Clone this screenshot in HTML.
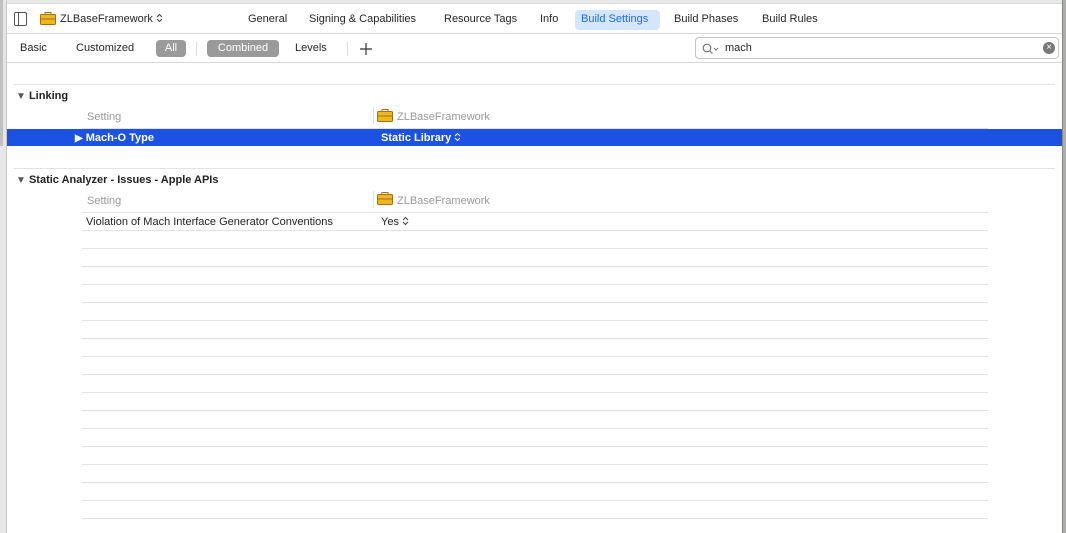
<!DOCTYPE html>
<html><head><meta charset="utf-8"><style>
*{margin:0;padding:0;box-sizing:border-box}
body{width:1066px;height:533px;overflow:hidden;background:#fff;font-family:"Liberation Sans",sans-serif;font-size:11px;color:#222;position:relative}
.a{position:absolute;white-space:nowrap}
.hl{position:absolute;height:1px;background:#e2e2e2}
.tb{font-size:11px;color:#262626}
.ud{display:inline-block;vertical-align:-1px;margin-left:3px}
</style></head><body>
<div class="a" style="left:0;top:0;width:1066px;height:4px;background:#e8e8e8;border-bottom:1px solid #d8d8d8"></div>
<div class="a" style="left:0;top:0;width:7px;height:533px;background:#e6e6e6;border-right:1px solid #c8c8c8"></div>
<div class="a" style="left:0;top:0;width:3px;height:146px;background:#c0c0c0"></div>
<div class="a" style="left:1062px;top:0;width:4px;height:533px;background:#a9b0a8;border-left:1px solid #888"></div>
<div class="a" style="left:7px;top:33px;width:1055px;height:1px;background:#d6d6d6"></div>
<div class="a" style="left:7px;top:62px;width:1055px;height:1px;background:#d6d6d6"></div>
<div class="a" style="left:14px;top:12px;width:13px;height:14px;border:1px solid #555;border-radius:2px"></div>
<div class="a" style="left:18px;top:12px;width:1px;height:14px;background:#555"></div>
<svg class="a" style="left:40px;top:12px" width="16" height="13" viewBox="0 0 16 13"><rect x="5" y="0.5" width="6" height="3" fill="none" stroke="#a5700f"/><rect x="0.5" y="2.5" width="15" height="10" rx="1" fill="#f0b820" stroke="#a5700f"/><line x1="1" y1="7" x2="15" y2="7" stroke="#a5700f"/></svg>
<div class="a tb" style="left:60px;top:13px">ZLBaseFramework<svg class="ud" width="7" height="10" viewBox="0 0 7 10"><path d="M1 4l2.5-2.5L6 4M1 6l2.5 2.5L6 6" fill="none" stroke="#444"/></svg></div>
<div class="a tb" style="left:248px;top:13px">General</div>
<div class="a tb" style="left:309px;top:13px">Signing &amp; Capabilities</div>
<div class="a tb" style="left:444px;top:13px">Resource Tags</div>
<div class="a tb" style="left:540px;top:13px">Info</div>
<div class="a" style="left:575px;top:10px;width:85px;height:20px;background:#d3e6fd;border-radius:4px"></div>
<div class="a tb" style="left:581px;top:13px;color:#1a6cf0">Build Settings</div>
<div class="a tb" style="left:674px;top:13px">Build Phases</div>
<div class="a tb" style="left:762px;top:13px">Build Rules</div>
<div class="a tb" style="left:20px;top:42px">Basic</div>
<div class="a tb" style="left:76px;top:42px">Customized</div>
<div class="a" style="left:156px;top:40px;width:30px;height:17px;background:#9a9a9a;border-radius:4px;color:#fff;text-align:center;line-height:17px">All</div>
<div class="a" style="left:196px;top:42px;width:1px;height:14px;background:#ddd"></div>
<div class="a" style="left:207px;top:40px;width:72px;height:17px;background:#9a9a9a;border-radius:4px;color:#fff;text-align:center;line-height:17px">Combined</div>
<div class="a tb" style="left:295px;top:42px">Levels</div>
<div class="a" style="left:347px;top:42px;width:1px;height:14px;background:#ddd"></div>
<svg class="a" style="left:360px;top:43px" width="12" height="12" viewBox="0 0 12 12"><path d="M6 0v12M0 6h12" stroke="#333" stroke-width="1.2"/></svg>
<div class="a" style="left:695px;top:37px;width:364px;height:22px;border:1px solid #c4c4c4;border-radius:4px"></div>
<svg class="a" style="left:702px;top:43px" width="18" height="12" viewBox="0 0 18 12"><circle cx="5" cy="5" r="3.8" fill="none" stroke="#777" stroke-width="1.2"/><line x1="8" y1="8" x2="10.5" y2="10.5" stroke="#777" stroke-width="1.2"/><path d="M12 5l2 2 2-2" fill="none" stroke="#777"/></svg>
<div class="a tb" style="left:725px;top:42px">mach</div>
<div class="a" style="left:1043px;top:42px;width:12px;height:12px;border-radius:50%;background:#777;color:#fff;font-size:10px;line-height:12px;text-align:center">×</div>
<div class="hl" style="left:14px;top:84px;width:1041px"></div>
<div class="a" style="left:16px;top:90px;font-weight:bold;color:#222"><span style="color:#555;font-size:10px">▼</span> Linking</div>
<div class="a" style="left:87px;top:111px;color:#999">Setting</div>
<div class="a" style="left:373px;top:107px;width:1px;height:17px;background:#e0e0e0"></div>
<svg class="a" style="left:377px;top:109px" width="16" height="13" viewBox="0 0 16 13"><rect x="5" y="0.5" width="6" height="3" fill="none" stroke="#a5700f"/><rect x="0.5" y="2.5" width="15" height="10" rx="1" fill="#f0b820" stroke="#a5700f"/><line x1="1" y1="7" x2="15" y2="7" stroke="#a5700f"/></svg>
<div class="a" style="left:397px;top:111px;color:#999">ZLBaseFramework</div>
<div class="hl" style="left:82px;top:128px;width:906px"></div>
<div class="a" style="left:7px;top:129px;width:1055px;height:17px;background:#1b52e3"></div>
<div class="a" style="left:75px;top:132px;color:#fff;font-weight:bold"><span style="font-size:10px">▶</span> Mach-O Type</div>
<div class="a" style="left:381px;top:132px;color:#fff;font-weight:bold">Static Library<svg class="ud" width="7" height="10" viewBox="0 0 7 10"><path d="M1 4l2.5-2.5L6 4M1 6l2.5 2.5L6 6" fill="none" stroke="#fff"/></svg></div>
<div class="hl" style="left:14px;top:168px;width:1041px"></div>
<div class="a" style="left:16px;top:174px;font-weight:bold;color:#222"><span style="color:#555;font-size:10px">▼</span> Static Analyzer - Issues - Apple APIs</div>
<div class="a" style="left:87px;top:195px;color:#999">Setting</div>
<div class="a" style="left:373px;top:191px;width:1px;height:17px;background:#e0e0e0"></div>
<svg class="a" style="left:377px;top:192px" width="16" height="13" viewBox="0 0 16 13"><rect x="5" y="0.5" width="6" height="3" fill="none" stroke="#a5700f"/><rect x="0.5" y="2.5" width="15" height="10" rx="1" fill="#f0b820" stroke="#a5700f"/><line x1="1" y1="7" x2="15" y2="7" stroke="#a5700f"/></svg>
<div class="a" style="left:397px;top:195px;color:#999">ZLBaseFramework</div>
<div class="hl" style="left:82px;top:212px;width:906px"></div>
<div class="a" style="left:86px;top:216px;color:#222">Violation of Mach Interface Generator Conventions</div>
<div class="a" style="left:381px;top:216px;color:#222">Yes<svg class="ud" width="7" height="10" viewBox="0 0 7 10"><path d="M1 4l2.5-2.5L6 4M1 6l2.5 2.5L6 6" fill="none" stroke="#444"/></svg></div>
<div class="hl" style="left:82px;top:230px;width:906px"></div>
<div class="hl" style="left:82px;top:248px;width:906px"></div>
<div class="hl" style="left:82px;top:266px;width:906px"></div>
<div class="hl" style="left:82px;top:284px;width:906px"></div>
<div class="hl" style="left:82px;top:302px;width:906px"></div>
<div class="hl" style="left:82px;top:320px;width:906px"></div>
<div class="hl" style="left:82px;top:338px;width:906px"></div>
<div class="hl" style="left:82px;top:356px;width:906px"></div>
<div class="hl" style="left:82px;top:374px;width:906px"></div>
<div class="hl" style="left:82px;top:392px;width:906px"></div>
<div class="hl" style="left:82px;top:410px;width:906px"></div>
<div class="hl" style="left:82px;top:428px;width:906px"></div>
<div class="hl" style="left:82px;top:446px;width:906px"></div>
<div class="hl" style="left:82px;top:464px;width:906px"></div>
<div class="hl" style="left:82px;top:482px;width:906px"></div>
<div class="hl" style="left:82px;top:500px;width:906px"></div>
<div class="hl" style="left:82px;top:518px;width:906px"></div>
</body></html>
